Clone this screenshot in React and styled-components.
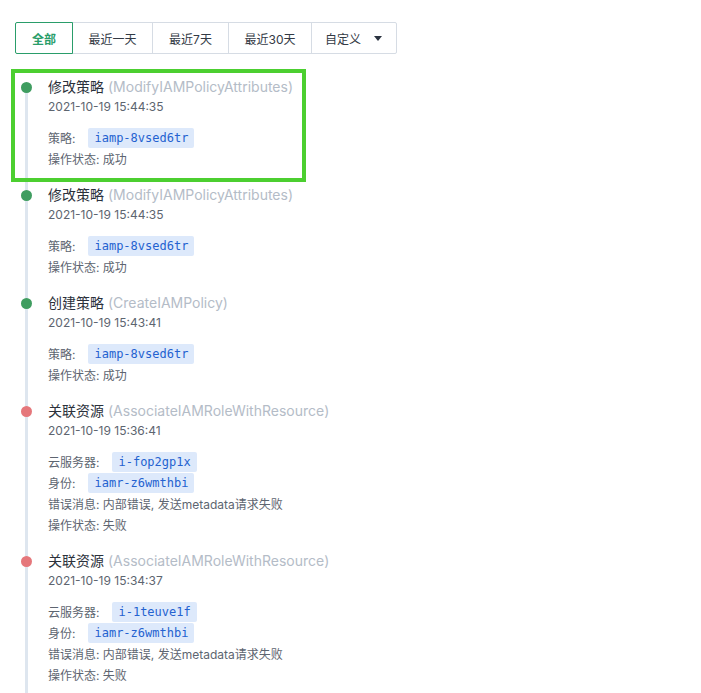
import React from 'react'
import styled, { createGlobalStyle } from 'styled-components'

const GlobalStyle = createGlobalStyle`
  body {
    margin: 0;
    background: #fff;
    font-family: Inter, "Noto Sans CJK SC", sans-serif;
  }
`

const Page = styled.div`
  padding: 22px 15px 0;
  height: 693px;
  box-sizing: border-box;
  overflow: hidden;
`

const Toolbar = styled.div`
  display: inline-flex;
  height: 32px;
`

const FilterBtn = styled.div`
  display: flex;
  align-items: center;
  justify-content: center;
  box-sizing: border-box;
  white-space: nowrap;
  width: ${p => p.$w}px;
  margin-left: -1px;
  font-size: 12px;
  color: ${p => (p.$active ? '#2a9d6a' : '#333a45')};
  font-weight: ${p => (p.$active ? 600 : 400)};
  border: 1px solid ${p => (p.$active ? '#2a9d6a' : '#d6dce4')};
  position: relative;
  z-index: ${p => (p.$active ? 1 : 0)};
  &:first-child {
    margin-left: 0;
    border-radius: 2px 0 0 2px;
  }
  &:last-child {
    border-radius: 0 2px 2px 0;
    justify-content: flex-start;
    padding-left: 13px;
  }
`

const Caret = styled.span`
  width: 0;
  height: 0;
  margin-left: 13px;
  border-left: 4.5px solid transparent;
  border-right: 4.5px solid transparent;
  border-top: 5px solid #2b3340;
`

const Timeline = styled.div`
  margin-top: 23px;
`

const Item = styled.div`
  display: flex;
  position: relative;
`

const Rail = styled.div`
  width: 22px;
  flex-shrink: 0;
  padding-top: 5px;
  display: flex;
  justify-content: center;
  background: linear-gradient(#dee6ef, #dee6ef) no-repeat;
  background-size: 3px ${p => (p.$first ? 'calc(100% - 10px)' : '100%')};
  background-position: 10px bottom;
`

const Dot = styled.span`
  width: 11px;
  height: 11px;
  border-radius: 50%;
  background: ${p => (p.$fail ? '#e5777b' : '#3f9d60')};
`

const Body = styled.div`
  margin-left: 11px;
  padding-bottom: 16px;
`

const Title = styled.div`
  height: 20px;
  line-height: 20px;
  font-size: 14px;
  color: #2b313b;
`

const Action = styled.span`
  color: #b4bcc7;
  margin-left: 4px;
`

const Time = styled.div`
  height: 20px;
  line-height: 20px;
  font-size: 12px;
  color: #5d6570;
`

const Details = styled.div`
  margin-top: 10px;
`

const Row = styled.div`
  display: flex;
  align-items: center;
  height: 21px;
  font-size: 12px;
  color: #5d6570;
`

const Label = styled.span`
  margin-right: 13px;
`

const Tag = styled.span`
  display: inline-block;
  height: 20px;
  line-height: 20px;
  padding: 0 6px;
  border-radius: 2px;
  background: #dde9fb;
  color: #2462d0;
  font-family: "DejaVu Sans Mono", monospace;
  font-size: 12px;
`

const Highlight = styled.div`
  position: absolute;
  left: -4px;
  top: -8px;
  width: 295px;
  height: 113px;
  box-sizing: border-box;
  border: 4px solid #4ccf30;
  pointer-events: none;
`

const filters = [
  { text: '全部', w: 58, active: true },
  { text: '最近一天', w: 81 },
  { text: '最近7天', w: 77 },
  { text: '最近30天', w: 84 },
]

const events = [
  {
    name: '修改策略', action: 'ModifyIAMPolicyAttributes', time: '2021-10-19 15:44:35',
    tags: [['策略:', 'iamp-8vsed6tr']], status: '成功', highlight: true,
  },
  {
    name: '修改策略', action: 'ModifyIAMPolicyAttributes', time: '2021-10-19 15:44:35',
    tags: [['策略:', 'iamp-8vsed6tr']], status: '成功',
  },
  {
    name: '创建策略', action: 'CreateIAMPolicy', time: '2021-10-19 15:43:41',
    tags: [['策略:', 'iamp-8vsed6tr']], status: '成功',
  },
  {
    name: '关联资源', action: 'AssociateIAMRoleWithResource', time: '2021-10-19 15:36:41',
    tags: [['云服务器:', 'i-fop2gp1x'], ['身份:', 'iamr-z6wmthbi']],
    error: '内部错误, 发送metadata请求失败', status: '失败', fail: true,
  },
  {
    name: '关联资源', action: 'AssociateIAMRoleWithResource', time: '2021-10-19 15:34:37',
    tags: [['云服务器:', 'i-1teuve1f'], ['身份:', 'iamr-z6wmthbi']],
    error: '内部错误, 发送metadata请求失败', status: '失败', fail: true,
  },
]

export default function App() {
  return (
    <Page>
      <GlobalStyle />
      <Toolbar>
        {filters.map(f => (
          <FilterBtn key={f.text} $w={f.w} $active={f.active}>{f.text}</FilterBtn>
        ))}
        <FilterBtn $w={86}>自定义<Caret /></FilterBtn>
      </Toolbar>

      <Timeline>
        {events.map((e, i) => (
          <Item key={i}>
            <Rail $first={i === 0}>
              <Dot $fail={e.fail} />
            </Rail>
            <Body>
              <Title>{e.name}<Action>({e.action})</Action></Title>
              <Time>{e.time}</Time>
              <Details>
                {e.tags.map(([label, value]) => (
                  <Row key={label}>
                    <Label>{label}</Label>
                    <Tag>{value}</Tag>
                  </Row>
                ))}
                {e.error && <Row>错误消息: {e.error}</Row>}
                <Row>操作状态: {e.status}</Row>
              </Details>
            </Body>
            {e.highlight && <Highlight />}
          </Item>
        ))}
      </Timeline>
    </Page>
  )
}
